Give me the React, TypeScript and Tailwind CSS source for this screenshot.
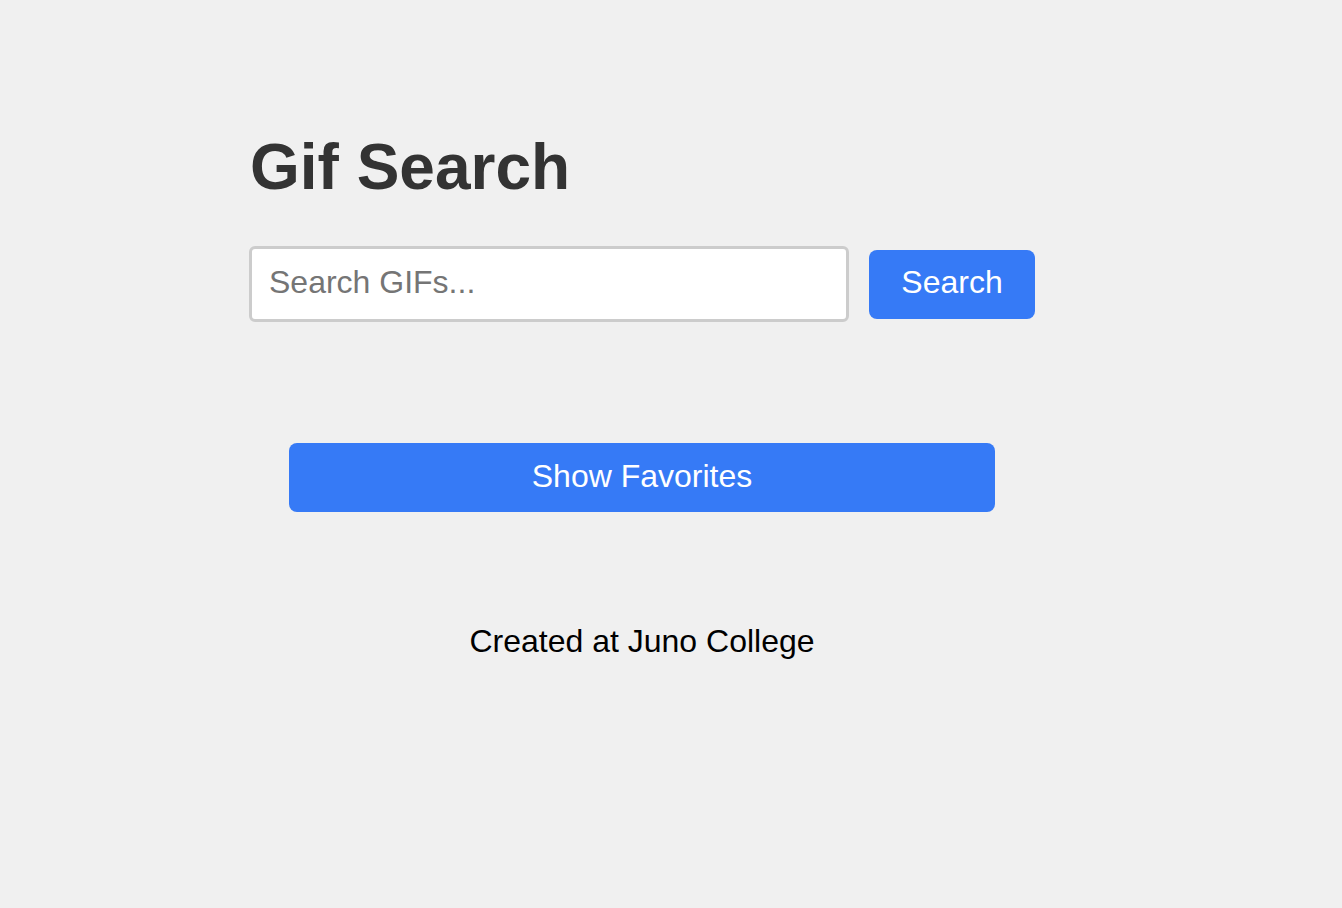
export default function App() {
    return (
        <main className="min-h-[908px] w-full bg-[#f0f0f0] font-['Liberation_Sans',Arial,sans-serif] pl-[249px] pt-[130px]">
            <div className="w-[786px] flex flex-col">
                <h1 className="text-[64px] leading-[74px] font-bold text-[#333333] pl-[1px]">Gif Search</h1>

                <form className="flex items-center gap-[20px] mt-[42px]" onSubmit={(e) => e.preventDefault()}>
                    <input
                        type="text"
                        placeholder="Search GIFs..."
                        className="w-[600px] h-[76px] bg-white border-[3px] border-[#cccccc] rounded-[6px] px-[17px] pb-[4px] text-[32px] text-[#333] placeholder:text-[#757575] outline-none"
                    />
                    <button
                        type="submit"
                        className="w-[166px] h-[69px] pb-[4px] bg-[#367af6] text-white text-[32px] rounded-[8px]"
                    >
                        Search
                    </button>
                </form>

                <button className="mx-[40px] mt-[121px] h-[69px] pb-[4px] bg-[#367af6] text-white text-[32px] rounded-[8px]">
                    Show Favorites
                </button>

                <footer className="mt-[111px] text-center text-[32px] leading-[37px] text-black">
                    <p>Created at Juno College</p>
                </footer>
            </div>
        </main>
    )
}
